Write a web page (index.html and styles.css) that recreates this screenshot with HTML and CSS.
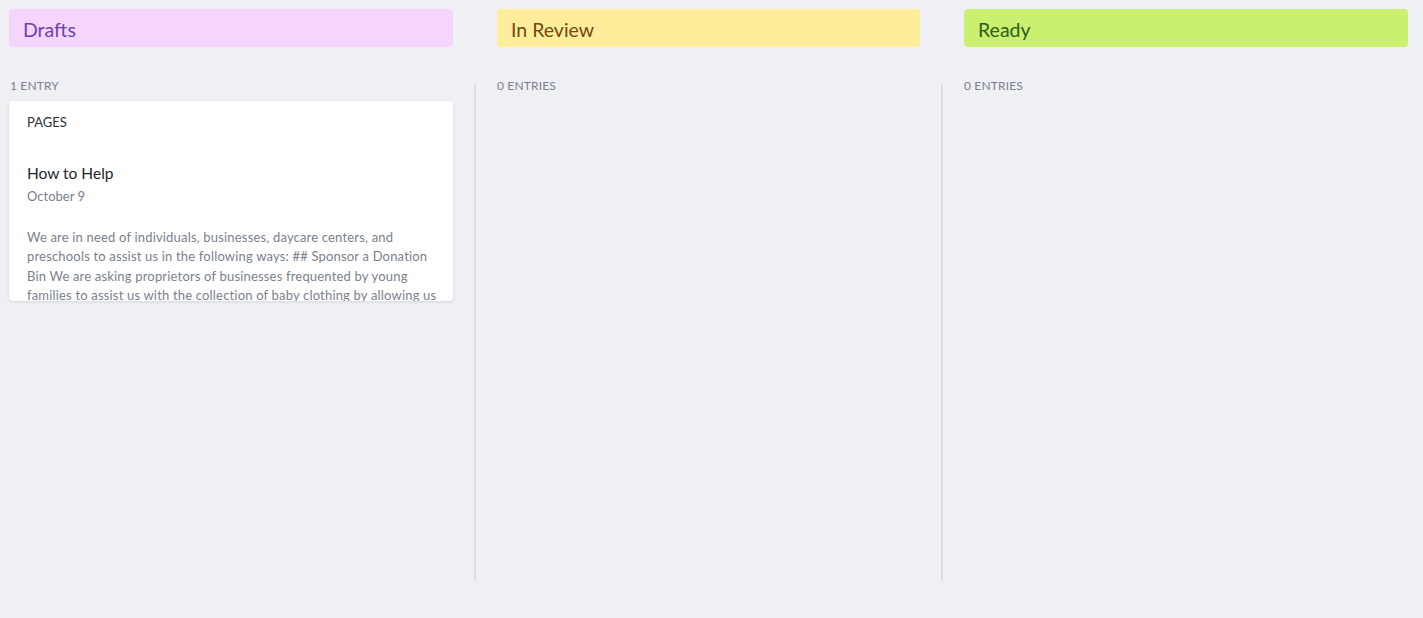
FILE: index.html
```html
<!DOCTYPE html>
<html lang="en">
<head>
<meta charset="utf-8">
<title>Board</title>
<link rel="stylesheet" href="styles.css">
</head>
<body>
<div class="board">
  <section class="column column-wide">
    <h2 class="column-title title-drafts">Drafts</h2>
    <div class="count">1 ENTRY</div>
    <article class="card">
      <div class="card-type">PAGES</div>
      <h3 class="card-title">How to Help</h3>
      <div class="card-date">October 9</div>
      <p class="card-body">We are in need of individuals, businesses, daycare centers, and preschools to assist us in the following ways: ## Sponsor a Donation Bin We are asking proprietors of businesses frequented by young families to assist us with the collection of baby clothing by allowing us to place a donation bin in their place of business.</p>
    </article>
  </section>
  <div class="divider"></div>
  <section class="column column-mid">
    <h2 class="column-title title-review">In Review</h2>
    <div class="count">0 ENTRIES</div>
  </section>
  <div class="divider"></div>
  <section class="column column-wide">
    <h2 class="column-title title-ready">Ready</h2>
    <div class="count">0 ENTRIES</div>
  </section>
</div>
</body>
</html>
```

FILE: styles.css
```css
html, body {
  margin: 0;
  padding: 0;
  background: #eff0f4;
  font-family: Lato, "Liberation Sans", sans-serif;
}

.board {
  display: flex;
  align-items: flex-start;
  padding: 9px 15px 0 9px;
}

.column {
  display: flex;
  flex-direction: column;
  flex: none;
}

.column-wide { width: 444px; }
.column-mid { width: 423px; }

.divider {
  flex: none;
  width: 2px;
  height: 497px;
  margin: 75px 21px 0 21px;
  background: #dcdde3;
}

.column-title {
  margin: 0;
  height: 38px;
  box-sizing: border-box;
  padding: 0 14px;
  display: flex;
  align-items: center;
  padding-top: 3px;
  border-radius: 4px;
  font-size: 19.5px;
  font-weight: 400;
}

.title-drafts { background: #f5d5fc; color: #6a44b0; }
.title-review { background: #feee9c; color: #74480e; }
.title-ready { background: #cbef6e; color: #2a6118; }

.count {
  margin-top: 31px;
  padding-left: 1px;
  height: 23px;
  font-size: 12px;
  letter-spacing: 0.15px;
  color: #7c8090;
  line-height: 16px;
}

.column-mid .count,
.column-wide:last-child .count { padding-left: 0; }

.card {
  background: #fff;
  border-radius: 4px;
  box-shadow: 0 1px 3px rgba(40, 45, 70, 0.12);
  height: 200px;
  overflow: hidden;
  box-sizing: border-box;
  padding: 13px 10px 0 18px;
}

.card-type {
  font-size: 13px;
  line-height: 16px;
  color: #2a2e38;
}

.card-title {
  margin: 33px 0 0 0;
  font-size: 15.5px;
  font-weight: 400;
  line-height: 20px;
  color: #22252d;
}

.card-date {
  margin-top: 4px;
  font-size: 13px;
  line-height: 18px;
  color: #7a7f8e;
}

.card-body {
  margin: 23px 0 0 0;
  font-size: 13px;
  letter-spacing: 0.18px;
  line-height: 19.4px;
  color: #7a7f8e;
}
```
